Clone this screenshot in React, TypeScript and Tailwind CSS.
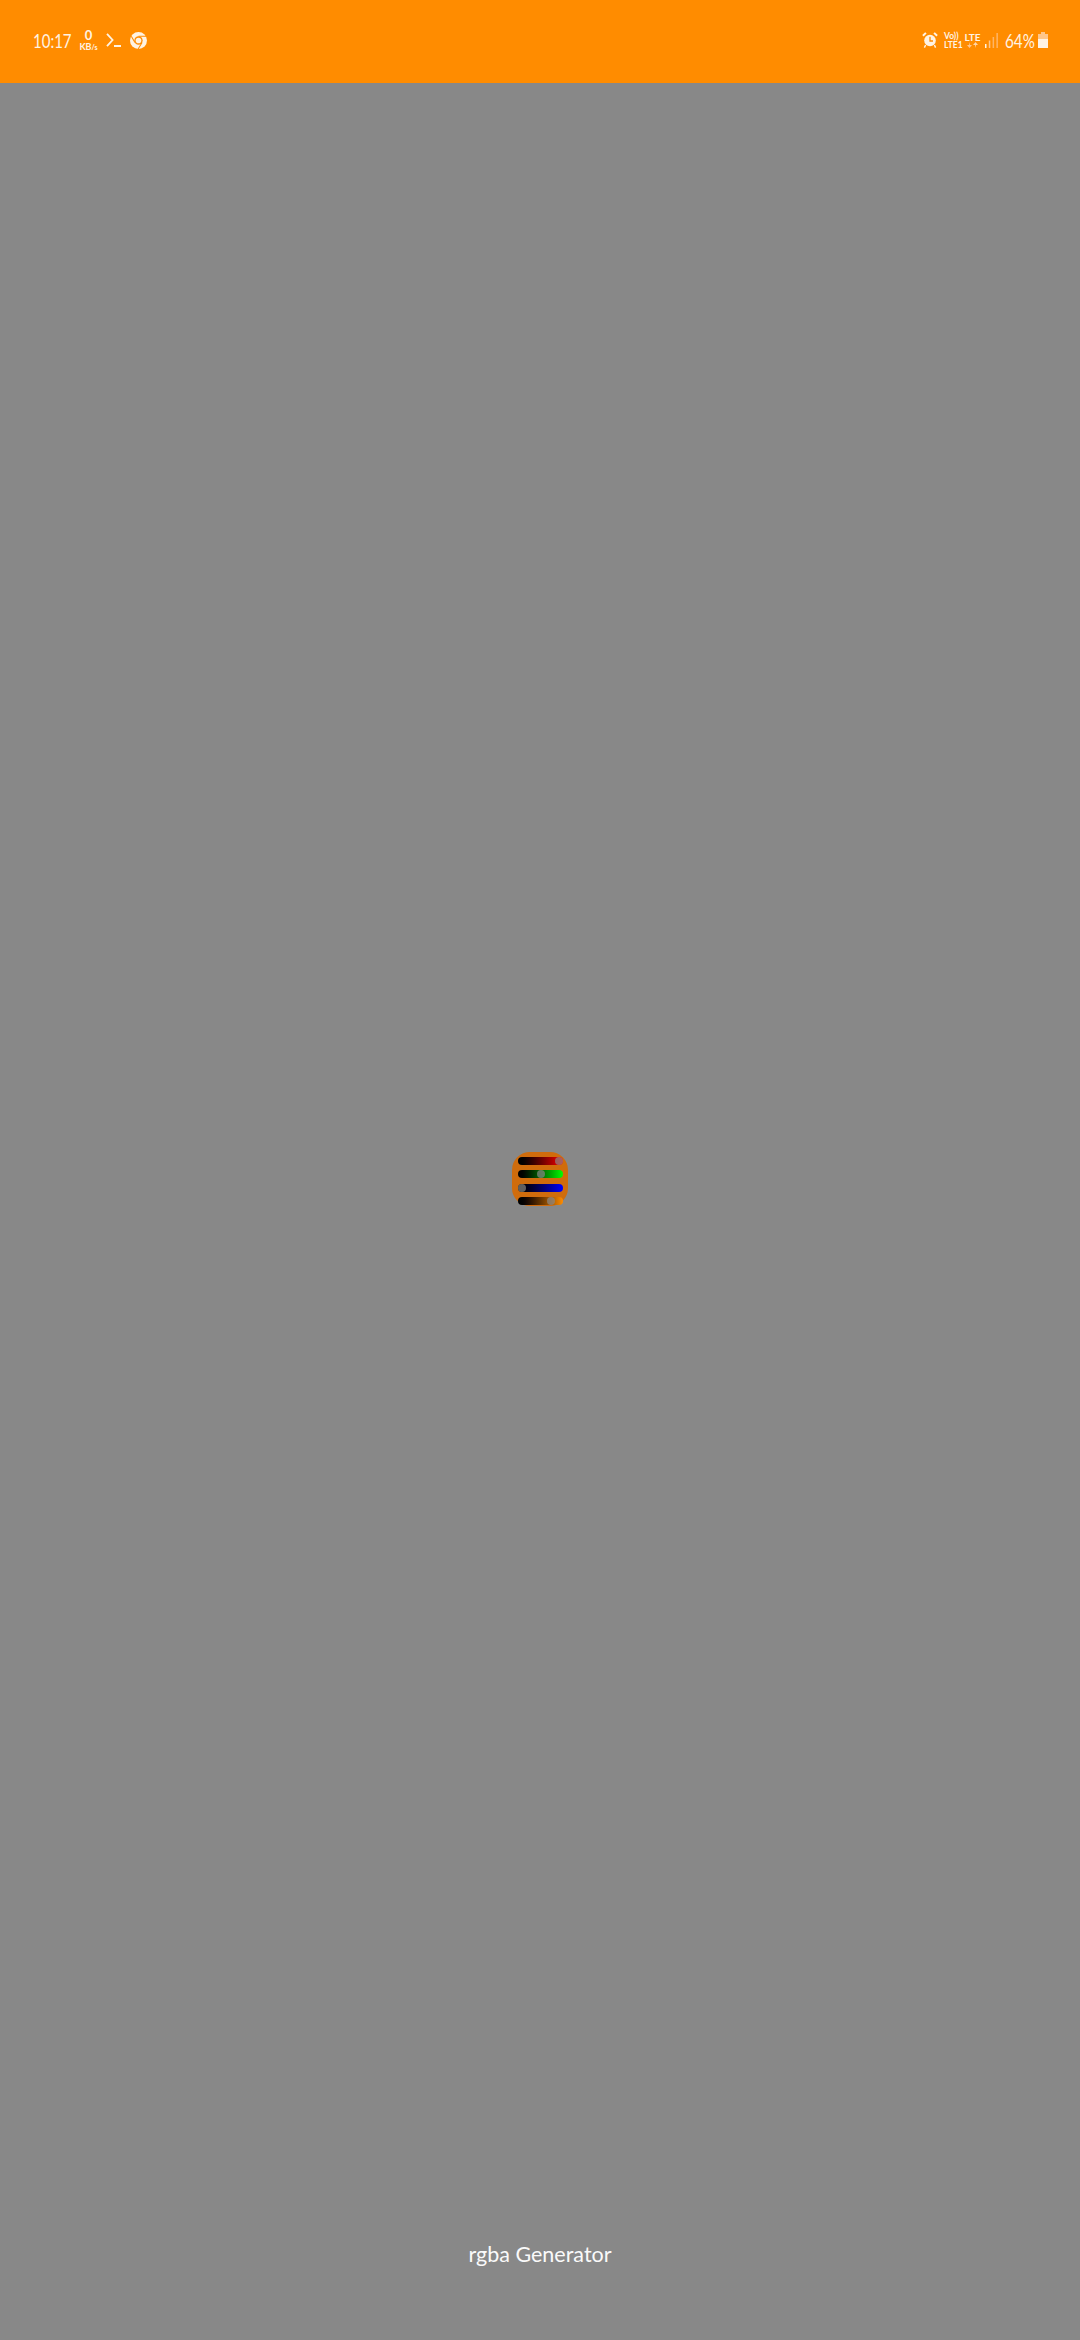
const font = { fontFamily: 'Lato, "Noto Sans", sans-serif' };

function Chrome() {
  return (
    <svg width="17" height="17" viewBox="0 0 18 18" className="ml-[9px]">
      <circle cx="9" cy="9" r="9" fill="#fff3e3" />
      <circle cx="9" cy="9" r="4.4" fill="#ff8c00" />
      <circle cx="9" cy="9" r="3" fill="#fff3e3" />
      <path d="M9 4.6 L17 4.6 M5.2 11.2 L1.4 4.4 M12.8 11.2 L8.6 18" stroke="#ff8c00" strokeWidth="1.1" fill="none" />
    </svg>
  );
}

function Terminal() {
  return (
    <svg width="15" height="14" viewBox="0 0 15 14" className="ml-[8px]">
      <path d="M1 0.8 L6.6 7 L1 13.2" stroke="#fff3e3" strokeWidth="1.8" fill="none" />
      <rect x="8" y="12" width="7" height="2" fill="#fff3e3" />
    </svg>
  );
}

function Alarm() {
  return (
    <svg width="16" height="16" viewBox="0 0 16 16">
      <circle cx="8" cy="8.5" r="5.8" fill="#fff3e3" />
      <path d="M8 4.8 V9 H11" stroke="#ff8c00" strokeWidth="1.3" fill="none" />
      <path d="M0.2 3 L3.2 0.2 L4.6 1.6 L1.6 4.4 Z M15.8 3 L12.8 0.2 L11.4 1.6 L14.4 4.4 Z" fill="#fff3e3" />
      <path d="M3.6 13 L2.4 15.6 M12.4 13 L13.6 15.6" stroke="#fff3e3" strokeWidth="1.4" />
    </svg>
  );
}

function Arrows() {
  return (
    <svg width="11" height="6" viewBox="0 0 11 6">
      <path d="M3 0 V3 H5 L2.5 6 L0 3 H2 Z" fill="#ffc68a" />
      <path d="M8 6 V3 H6 L8.5 0 L11 3 H9 Z" fill="#ffd5a8" />
    </svg>
  );
}

function Signal() {
  return (
    <svg width="13" height="15" viewBox="0 0 13 15" className="ml-[5px]">
      <rect x="0" y="11" width="1.5" height="4" fill="#fff3e3" />
      <rect x="3.8" y="7.5" width="1.5" height="7.5" fill="#ffc68a" />
      <rect x="7.6" y="4" width="1.5" height="11" fill="#ffb566" />
      <rect x="11.4" y="0" width="1.5" height="15" fill="#ffb566" />
    </svg>
  );
}

function Battery() {
  return (
    <svg width="10" height="16" viewBox="0 0 10 16" className="ml-[3px]">
      <rect x="3" y="0" width="4" height="2" fill="#ffc68a" />
      <rect x="0" y="2" width="10" height="5" fill="#ffc68a" />
      <rect x="0" y="7" width="10" height="9" fill="#fff3e3" />
    </svg>
  );
}

function Slider({ gradient, knob }: { gradient: string; knob: string }) {
  return (
    <div className={`relative h-[8px] w-[45px] shrink-0 rounded-full ${gradient}`}>
      <div className={`absolute top-0 h-[8px] w-[8px] rounded-full bg-[#888888]/70 ${knob}`} />
    </div>
  );
}

export default function App() {
  return (
    <div className="flex h-[2340px] w-[1080px] flex-col overflow-hidden bg-[#888888]" style={font}>
      <header className="flex h-[83px] shrink-0 items-center justify-between bg-[#ff8c00] pb-[3px] pl-[33px] pr-[32px] text-[#fff3e3]">
        <div className="flex items-center">
          <div className="w-[39px] origin-left scale-x-[0.75] whitespace-nowrap text-[20px] leading-none">10:17</div>
          <div className="ml-[7px] flex w-[19px] flex-col items-center">
            <span className="text-[13px] font-bold leading-[11px]">0</span>
            <span className="mt-[2px] whitespace-nowrap text-[9px] font-bold leading-[7px]">KB<span className="text-[7px]">/s</span></span>
          </div>
          <Terminal />
          <Chrome />
        </div>
        <div className="flex items-center">
          <Alarm />
          <div className="ml-[6px] flex w-[17px] flex-col font-bold">
            <span className="origin-left scale-x-[0.85] whitespace-nowrap text-[10px] leading-[9px]">Vo))</span>
            <span className="origin-left scale-x-[0.85] whitespace-nowrap text-[10px] leading-[9px]">LTE1</span>
          </div>
          <div className="ml-[4px] flex w-[15px] flex-col items-center font-bold">
            <span className="whitespace-nowrap text-[10px] leading-[9px]">LTE</span>
            <Arrows />
          </div>
          <Signal />
          <div className="ml-[7px] w-[30px] origin-left scale-x-[0.76] whitespace-nowrap text-[20px] leading-none">64%</div>
          <Battery />
        </div>
      </header>
      <main className="flex flex-1 flex-col items-center pt-[1069px]">
        <div className="flex h-[54px] w-[56px] flex-col items-center gap-[5.3px] rounded-[18px] bg-[#d06c0c] pt-[5px]">
          <Slider gradient="bg-gradient-to-r from-black to-[#ff0000]" knob="right-0" />
          <Slider gradient="bg-gradient-to-r from-black to-[#00ff00]" knob="left-[19px]" />
          <Slider gradient="bg-gradient-to-r from-black to-[#0000ff]" knob="left-0" />
          <Slider gradient="bg-gradient-to-r from-black to-[#ff8c00]" knob="left-[29px]" />
        </div>
        <div className="mt-[1038px] text-[21.5px] leading-none text-[#fafafa]">rgba Generator</div>
      </main>
    </div>
  );
}
